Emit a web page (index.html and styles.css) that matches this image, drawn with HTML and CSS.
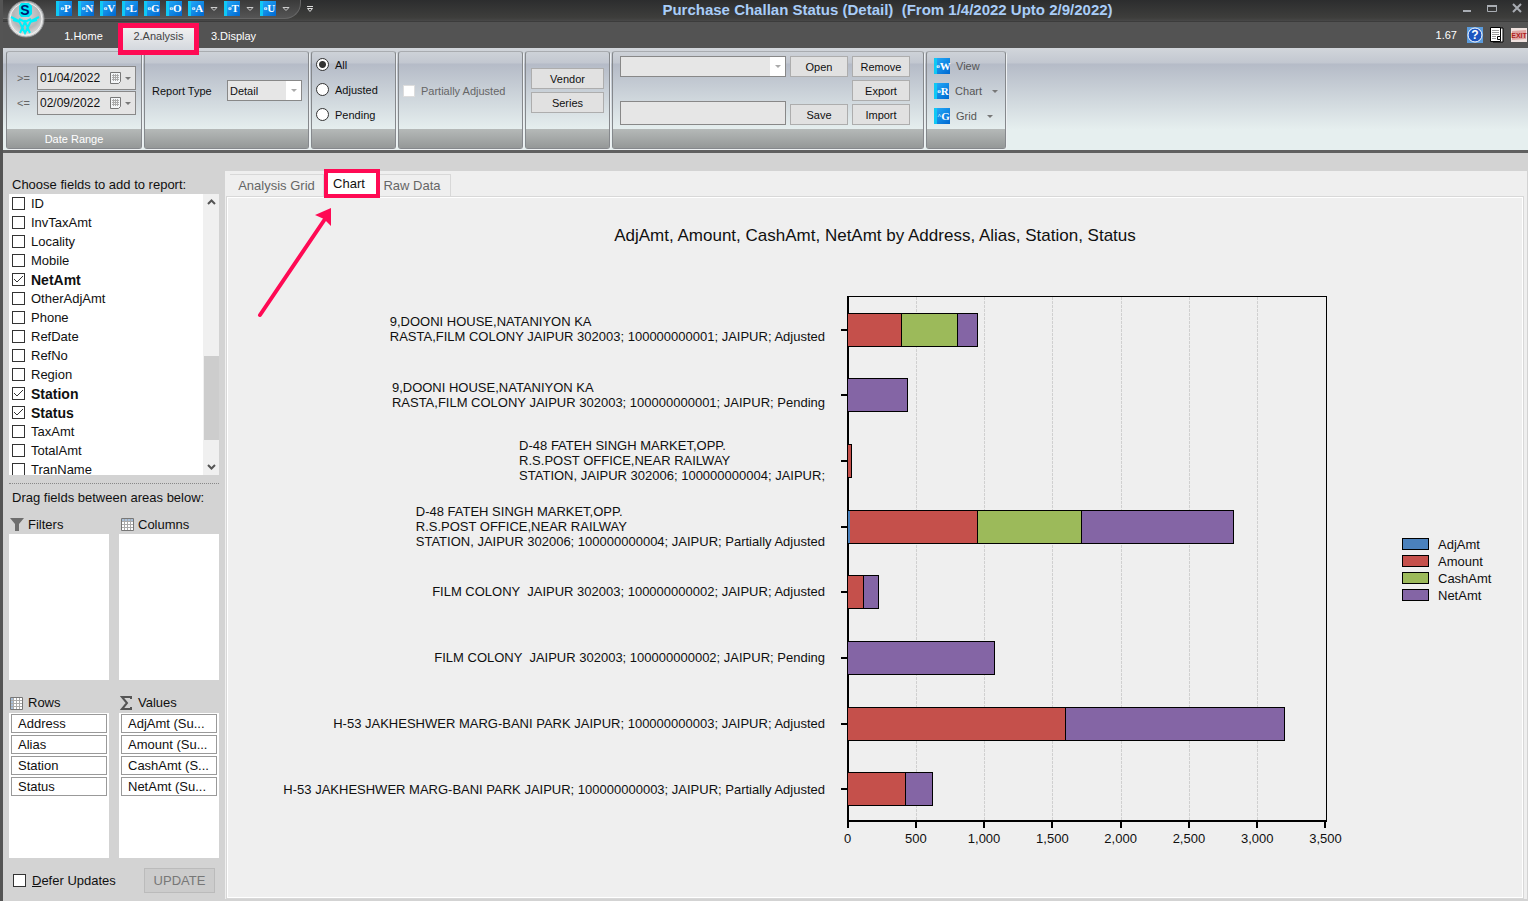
FILE: index.html
```html
<!DOCTYPE html>
<html lang="en">
<head>
    <meta charset="UTF-8">
    <meta name="viewport" content="width=device-width, initial-scale=1.0">
    <title>Purchase Challan Status (Detail)</title>
    <link rel="stylesheet" href="styles.css">
</head>
<body>
    <header class="titlebar">
        <div class="quick-bar">
            <button class="cmd" type="button"><small>o</small>P</button>
            <button class="cmd" type="button"><small>o</small>N</button>
            <button class="cmd" type="button"><small>o</small>V</button>
            <button class="cmd" type="button"><small>o</small>L</button>
            <button class="cmd" type="button"><small>o</small>G</button>
            <button class="cmd" type="button"><small>o</small>O</button>
            <button class="cmd" type="button"><small>o</small>A</button>
            <svg class="chev" viewBox="0 0 8 6"><path d="M1 1.500h6L4 4.500z" /></svg>
            <button class="cmd" type="button"><small>o</small>T</button>
            <svg class="chev" viewBox="0 0 8 6"><path d="M1 1.500h6L4 4.500z" /></svg>
            <button class="cmd" type="button"><small>o</small>U</button>
            <svg class="chev" viewBox="0 0 8 6"><path d="M1 1.500h6L4 4.500z" /></svg>
        </div>
        <svg class="more" viewBox="0 0 8 8"><path d="M1 1.500h6M1.500 3.500h5L4 6.500z" /></svg>
        <h1>Purchase Challan Status (Detail) &nbsp;(From 1/4/2022 Upto 2/9/2022)</h1>
        <div class="window-buttons">
            <button type="button" aria-label="Minimize"><svg viewBox="0 0 12 12"><path d="M2 8h8v2H2z" fill="#a9adb3" /></svg></button>
            <button type="button" aria-label="Maximize"><svg viewBox="0 0 12 12"><path d="M1.500 3.500h9v6h-9z" fill="none" stroke="#a9adb3" /><path d="M1 3h10v2H1z" fill="#a9adb3" /></svg></button>
            <button type="button" aria-label="Close"><svg viewBox="0 0 12 12"><path d="M2 2l8 8M10 2l-8 8" fill="none" stroke="#a9adb3" stroke-width="2" /></svg></button>
        </div>
    </header>

    <button class="orb" type="button" aria-label="Menu">
        <svg viewBox="0 0 38 38">
            <defs>
                <radialGradient id="orbFill" cx="50%" cy="40%" r="60%">
                    <stop offset="0" stop-color="#d4d6d8" />
                    <stop offset="0.600" stop-color="#b4b6b8" />
                    <stop offset="1" stop-color="#e8e8e8" />
                </radialGradient>
            </defs>
            <circle cx="19" cy="19" r="18" fill="url(#orbFill)" stroke="#8d8f91" />
            <circle cx="19" cy="19" r="16" fill="none" stroke="#f2f2f2" />
            <path d="M14 3h8l3 3v8l-3 3h-8l-2-3V6z" fill="#00e5f5" />
            <text x="18" y="15" text-anchor="middle">S</text>
            <path d="M4 17l8 4 6 12 6-12 8-4M6 20l7 2M30 20l-7 2M12 19l6 3 6-3M13 33l5-11 5 11" fill="none" stroke="#00f0fa" stroke-width="2" />
        </svg>
    </button>

    <nav class="menu-row">
        <button type="button">1.Home</button>
        <button type="button" class="active">2.Analysis</button>
        <button type="button">3.Display</button>
        <div class="menu-tools">
            <span class="version">1.67</span>
            <svg viewBox="0 0 16 16"><path d="M0 0h16v16H0z" fill="#5b9bdc" /><circle cx="8" cy="8" r="7" fill="#1c55c0" stroke="#fff" /><text class="help-mark" x="8" y="12" text-anchor="middle">?</text></svg>
            <svg viewBox="0 0 16 16"><path d="M4 1h10v14H4z" fill="#fff" stroke="#000" /><path d="M1.500 0.500h10v14h-10z" fill="#fff" stroke="#000" /><path d="M3 3.500h7M3 5.500h7M3 7.500h7M3 9.500h4M3 11.500h4" stroke="#999" /><path d="M8.500 9.500h3v3h-3z" fill="#fff" stroke="#000" /></svg>
            <svg viewBox="0 0 16 16"><path d="M0 1h16v14H0z" fill="#f0e2df" /><path d="M1 4l14-1v9L1 13z" fill="#dfa5a1" /><text class="exit-mark" x="8" y="11" text-anchor="middle">EXIT</text></svg>
        </div>
    </nav>

    <section class="ribbon">
        <fieldset class="group g-date">
            <div class="group-body">
                <label for="dateFrom">&gt;=</label>
                <div class="date">
                    <input type="text" id="dateFrom" value="01/04/2022">
                    <svg class="cal" viewBox="0 0 12 12"><path d="M0.500 0.500h10v9l-2 2h-8z" fill="#f4f6f8" stroke="#777" /><path d="M2 3.500h7M2 5.500h7M2 7.500h7M3.500 2v7M5.500 2v7M7.500 2v7" stroke="#aaa" /></svg>
                    <i class="arrow"></i>
                </div>
                <label for="dateTo">&lt;=</label>
                <div class="date">
                    <input type="text" id="dateTo" value="02/09/2022">
                    <svg class="cal" viewBox="0 0 12 12"><path d="M0.500 0.500h10v9l-2 2h-8z" fill="#f4f6f8" stroke="#777" /><path d="M2 3.500h7M2 5.500h7M2 7.500h7M3.500 2v7M5.500 2v7M7.500 2v7" stroke="#aaa" /></svg>
                    <i class="arrow"></i>
                </div>
            </div>
            <div class="caption">Date Range</div>
        </fieldset>
        <fieldset class="group g-type">
            <div class="group-body">
                <label for="reportType">Report Type</label>
                <div class="combo">
                    <select id="reportType"><option>Detail</option></select>
                    <span class="drop"><i class="arrow"></i></span>
                </div>
            </div>
            <div class="caption"></div>
        </fieldset>
        <fieldset class="group g-status">
            <div class="group-body">
                <label><input type="radio" name="status" checked>All</label>
                <label><input type="radio" name="status">Adjusted</label>
                <label><input type="radio" name="status">Pending</label>
            </div>
            <div class="caption"></div>
        </fieldset>
        <fieldset class="group g-partial">
            <div class="group-body">
                <label><input type="checkbox" disabled>Partially Adjusted</label>
            </div>
            <div class="caption"></div>
        </fieldset>
        <fieldset class="group g-vendor">
            <div class="group-body">
                <button class="btn" type="button">Vendor</button>
                <button class="btn" type="button">Series</button>
            </div>
            <div class="caption"></div>
        </fieldset>
        <fieldset class="group g-layout">
            <div class="group-body">
                <div class="layout-names">
                    <div class="combo">
                        <select aria-label="Saved layout"><option></option></select>
                        <span class="drop"><i class="arrow"></i></span>
                    </div>
                    <input type="text" aria-label="Layout name">
                </div>
                <div class="layout-buttons">
                    <button class="btn" type="button">Open</button>
                    <button class="btn" type="button">Save</button>
                </div>
                <div class="layout-buttons">
                    <button class="btn" type="button">Remove</button>
                    <button class="btn" type="button">Export</button>
                    <button class="btn" type="button">Import</button>
                </div>
            </div>
            <div class="caption"></div>
        </fieldset>
        <fieldset class="group g-view">
            <div class="group-body">
                <button type="button"><span class="cmd"><small>o</small>W</span>View</button>
                <button type="button"><span class="cmd"><small>o</small>R</span>Chart<i class="arrow"></i></button>
                <button type="button"><span class="cmd"><small>^</small>G</span>Grid<i class="arrow"></i></button>
            </div>
            <div class="caption"></div>
        </fieldset>
    </section>

    <main class="work">
        <aside class="sidebar">
            <p class="side-title">Choose fields to add to report:</p>
            <div class="field-list">
                <div class="fields">
                    <label><input type="checkbox">ID</label>
                    <label><input type="checkbox">InvTaxAmt</label>
                    <label><input type="checkbox">Locality</label>
                    <label><input type="checkbox">Mobile</label>
                    <label class="on"><input type="checkbox" checked>NetAmt</label>
                    <label><input type="checkbox">OtherAdjAmt</label>
                    <label><input type="checkbox">Phone</label>
                    <label><input type="checkbox">RefDate</label>
                    <label><input type="checkbox">RefNo</label>
                    <label><input type="checkbox">Region</label>
                    <label class="on"><input type="checkbox" checked>Station</label>
                    <label class="on"><input type="checkbox" checked>Status</label>
                    <label><input type="checkbox">TaxAmt</label>
                    <label><input type="checkbox">TotalAmt</label>
                    <label><input type="checkbox">TranName</label>
                </div>
                <div class="scroll">
                    <svg viewBox="0 0 9 9"><path d="M1 6l3.500-3.500L8 6" /></svg>
                    <div class="thumb"></div>
                    <svg viewBox="0 0 9 9"><path d="M1 3l3.500 3.500L8 3" /></svg>
                </div>
            </div>
            <p class="side-title drag">Drag fields between areas below:</p>
            <div class="areas">
                <section class="area">
                    <h2><svg viewBox="0 0 14 14"><path d="M0 1h14L9 7v7H5V7z" fill="#6d6d6d" /></svg>Filters</h2>
                    <div class="box"></div>
                </section>
                <section class="area">
                    <h2><svg viewBox="0 0 14 14"><path d="M1.500 1.500h12v12h-12z" fill="#fff" stroke="#777" /><path d="M2 2h11v3H2z" fill="#a9bfd8" /><path d="M2 4.500h11M2 7.500h11M2 10.500h11M4.500 2v11M7.500 2v11M10.500 2v11" stroke="#aaa" /></svg>Columns</h2>
                    <div class="box"></div>
                </section>
                <section class="area">
                    <h2><svg viewBox="0 0 14 14"><path d="M0.500 1.500h12v12h-12z" fill="#fff" stroke="#777" /><path d="M1 2h3v11H1z" fill="#a9bfd8" /><path d="M1 4.500h11M1 7.500h11M1 10.500h11M3.500 2v11M6.500 2v11M9.500 2v11" stroke="#aaa" /></svg>Rows</h2>
                    <div class="box">
                        <button type="button">Address</button>
                        <button type="button">Alias</button>
                        <button type="button">Station</button>
                        <button type="button">Status</button>
                    </div>
                </section>
                <section class="area">
                    <h2><svg viewBox="0 0 14 14"><path d="M11 3V1H2l5 6-5 6h9v-2" fill="none" stroke="#555" stroke-width="2" /></svg>Values</h2>
                    <div class="box">
                        <button type="button">AdjAmt (Su...</button>
                        <button type="button">Amount (Su...</button>
                        <button type="button">CashAmt (S...</button>
                        <button type="button">NetAmt (Su...</button>
                    </div>
                </section>
            </div>
            <div class="side-footer">
                <label><input type="checkbox"><span><u>D</u>efer Updates</span></label>
                <button type="button" disabled>UPDATE</button>
            </div>
        </aside>

        <section class="pane">
            <div class="tabs">
                <button type="button">Analysis Grid</button>
                <button type="button" class="active">Chart</button>
                <button type="button">Raw Data</button>
            </div>
            <svg class="pointer" viewBox="0 0 80 116"><path d="M5 111L70 15" fill="none" stroke="#ff0a54" stroke-width="4" stroke-linecap="round" /><path d="M76 4L60 11l9 4 7 7z" fill="#ff0a54" /></svg>
            <div class="page">
                <h2 class="chart-title">AdjAmt, Amount, CashAmt, NetAmt by Address, Alias, Station, Status</h2>
                <div class="chart">
                    <div class="categories">
                        <span>9,DOONI HOUSE,NATANIYON KA<br>RASTA,FILM COLONY JAIPUR 302003; 100000000001; JAIPUR; Adjusted</span>
                        <span>9,DOONI HOUSE,NATANIYON KA<br>RASTA,FILM COLONY JAIPUR 302003; 100000000001; JAIPUR; Pending</span>
                        <span>D-48 FATEH SINGH MARKET,OPP.<br>R.S.POST OFFICE,NEAR RAILWAY<br>STATION, JAIPUR 302006; 100000000004; JAIPUR;</span>
                        <span>D-48 FATEH SINGH MARKET,OPP.<br>R.S.POST OFFICE,NEAR RAILWAY<br>STATION, JAIPUR 302006; 100000000004; JAIPUR; Partially Adjusted</span>
                        <span>FILM COLONY &nbsp;JAIPUR 302003; 100000000002; JAIPUR; Adjusted</span>
                        <span>FILM COLONY &nbsp;JAIPUR 302003; 100000000002; JAIPUR; Pending</span>
                        <span>H-53 JAKHESHWER MARG-BANI PARK JAIPUR; 100000000003; JAIPUR; Adjusted</span>
                        <span>H-53 JAKHESHWER MARG-BANI PARK JAIPUR; 100000000003; JAIPUR; Partially Adjusted</span>
                    </div>
                    <div class="plot">
                        <div class="gridlines"><i></i><i></i><i></i><i></i><i></i><i></i><i></i></div>
                        <div class="bars">
                            <div class="bar"><i class="amount" style="width: 11.4%"></i><i class="cash" style="width: 11.7%"></i><i class="net" style="width: 4.1%"></i></div>
                            <div class="bar"><i class="net" style="width: 12.6%"></i></div>
                            <div class="bar"><i class="amount" style="width: 0.8%"></i></div>
                            <div class="bar"><i class="adj" style="width: 0.4%"></i><i class="amount" style="width: 26.8%"></i><i class="cash" style="width: 21.8%"></i><i class="net" style="width: 31.7%"></i></div>
                            <div class="bar"><i class="amount" style="width: 3.4%"></i><i class="net" style="width: 3.1%"></i></div>
                            <div class="bar"><i class="net" style="width: 30.8%"></i></div>
                            <div class="bar"><i class="amount" style="width: 45.7%"></i><i class="net" style="width: 45.7%"></i></div>
                            <div class="bar"><i class="amount" style="width: 12.1%"></i><i class="net" style="width: 5.7%"></i></div>
                        </div>
                    </div>
                    <ul class="legend">
                        <li><i class="adj"></i>AdjAmt</li>
                        <li><i class="amount"></i>Amount</li>
                        <li><i class="cash"></i>CashAmt</li>
                        <li><i class="net"></i>NetAmt</li>
                    </ul>
                    <div class="axis">
                        <span>0</span><span>500</span><span>1,000</span><span>1,500</span><span>2,000</span><span>2,500</span><span>3,000</span><span>3,500</span>
                    </div>
                </div>
            </div>
        </section>
    </main>
</body>
</html>
```
FILE: styles.css
```css
* {
    box-sizing: border-box;
}
body {
    margin: 0;
    min-height: 100vh;
    display: flex;
    flex-direction: column;
    position: relative;
    border-left: 3px solid #545454;
    background-color: #d3d3d3;
    color: #101010;
    font-family: "Liberation Sans", Arial, sans-serif;
    font-size: 13px;
}
button,
input,
select {
    margin: 0;
    font-family: inherit;
    font-size: inherit;
    color: inherit;
}
button {
    padding: 0;
    border: none;
    background: none;
}
svg {
    display: block;
    flex: none;
}
h1, h2, p, ul, fieldset {
    margin: 0;
    padding: 0;
    border: none;
    font-size: inherit;
    font-weight: normal;
}

/* title bar */
.titlebar {
    display: flex;
    align-items: flex-start;
    height: 22px;
    background: linear-gradient(#2c2d2e, #3e3e3c 85%, #484848);
    border-bottom: 1px solid #3c3c3c;
}
.quick-bar {
    display: flex;
    gap: 6px;
    width: 298px;
    height: 19px;
    padding: 1px 0 0 53px;
    border-bottom: 1px solid #666;
    border-right: 1px solid #666;
    border-radius: 0 0 16px 0;
    background: linear-gradient(#3a3a3a, #555);
}
.cmd {
    display: flex;
    align-items: center;
    justify-content: center;
    width: 16px;
    height: 15px;
    border-left: 3px solid #10c8f4;
    background: linear-gradient(135deg, #22a8f8, #0068d0);
    color: #fff;
    font-family: "Liberation Serif", serif;
    font-size: 11px;
    font-weight: bold;
    line-height: 15px;
}
.cmd small {
    font-size: 7px;
}
.chev {
    width: 8px;
    height: 6px;
    margin-top: 5px;
    fill: none;
    stroke: #ccc;
}
.more {
    width: 8px;
    height: 8px;
    margin: 5px 0 0 5px;
    fill: none;
    stroke: #ddd;
}
.titlebar h1 {
    flex: 1;
    color: #a9cdf8;
    font-size: 15px;
    font-weight: bold;
    line-height: 19px;
    text-align: center;
    white-space: nowrap;
}
.window-buttons {
    display: flex;
    gap: 13px;
    padding: 2px 5px 0 0;
}
.window-buttons svg {
    width: 12px;
    height: 12px;
}
.orb {
    position: absolute;
    top: 0;
    left: 4px;
}
.orb svg {
    width: 38px;
    height: 38px;
}
.orb text {
    fill: #001a70;
    font-size: 14px;
    font-weight: bold;
}

/* ribbon tabs */
.menu-row {
    display: flex;
    align-items: flex-start;
    height: 26px;
    padding-left: 43px;
    background-color: #535353;
    color: #fff;
    font-size: 11px;
}
.menu-row button {
    width: 75px;
    height: 28px;
}
.menu-row .active {
    position: relative;
    z-index: 1;
    width: 81px;
    height: 32px;
    margin: 1px -3px 0;
    padding-bottom: 6px;
    border: 5px solid #ff0a54;
    background: linear-gradient(#f0f0f0, #d4d8de);
    color: #444;
}
.menu-tools {
    display: flex;
    align-items: center;
    gap: 6px;
    margin-left: auto;
    height: 25px;
    padding-right: 1px;
}
.menu-tools svg {
    width: 16px;
    height: 16px;
}
.help-mark {
    fill: #fff;
    font-size: 12px;
    font-weight: bold;
}
.exit-mark {
    fill: #b0201c;
    font-size: 7px;
    font-weight: bold;
}
.version {
    margin-right: 4px;
}

/* ribbon */
.ribbon {
    display: flex;
    gap: 2px;
    height: 105px;
    padding: 3px;
    border-bottom: 3px solid #606060;
    background: linear-gradient(#d2d6db, #c2c7d0 15px, #b5bbc7 16px, #e6efef 82px);
    font-size: 11px;
}
.group {
    display: flex;
    flex-direction: column;
    min-width: 0;
    height: 98px;
    border: 1px solid #85888c;
    border-top-color: #a9acb0;
    border-radius: 3px;
    box-shadow: 1px 1px 0 #eef1f3;
}
.group-body {
    display: flex;
    flex: 1;
}
.caption {
    height: 19px;
    background: linear-gradient(#b5b9b8, #959898);
    color: #fff;
    line-height: 20px;
    text-align: center;
}
.g-date { width: 136px; }
.g-type { width: 165px; }
.g-status { width: 85px; }
.g-partial { width: 125px; }
.g-vendor { width: 85px; }
.g-layout { width: 312px; }
.g-view { width: 80px; }

.g-date .group-body {
    display: grid;
    grid-template-columns: 20px 99px;
    align-content: center;
    align-items: center;
    gap: 1px 0;
    padding-left: 10px;
}
.date {
    display: flex;
    align-items: center;
    height: 24px;
    padding-right: 4px;
    border: 1px solid #888;
    background-color: #e4e4e4;
}
.date input {
    flex: 1;
    width: 60px;
    padding: 0 0 0 2px;
    border: none;
    background: none;
    font-size: 12px;
}
.cal {
    width: 12px;
    height: 12px;
    margin-right: 3px;
}
.arrow {
    width: 0;
    height: 0;
    border: 3px solid transparent;
    border-top-color: #777;
    border-bottom: none;
}
.g-date label {
    color: #666;
}
.g-type .group-body {
    align-items: center;
    justify-content: space-between;
    padding: 0 6px 0 7px;
}
.combo {
    position: relative;
    width: 75px;
    height: 21px;
}
.combo select {
    appearance: none;
    width: 100%;
    height: 100%;
    padding: 0 2px;
    border: 1px solid #888;
    border-radius: 0;
    background-color: #e6e6e6;
}
.drop {
    position: absolute;
    top: 1px;
    right: 1px;
    bottom: 1px;
    display: flex;
    align-items: center;
    justify-content: center;
    width: 15px;
    background-color: #fff;
    pointer-events: none;
}
.drop .arrow {
    border-top-color: #aaa;
}
.g-status .group-body {
    flex-direction: column;
    gap: 12px;
    padding: 6px 4px 0;
}
.group label {
    display: flex;
    align-items: center;
}
input[type="radio"] {
    appearance: none;
    width: 13px;
    height: 13px;
    margin-right: 6px;
    border: 1px solid #333;
    border-radius: 50%;
    background-color: #fff;
}
input[type="radio"]:checked {
    background: radial-gradient(circle, #333 3px, #fff 4px);
}
.g-partial .group-body {
    align-items: center;
    padding-left: 4px;
    color: #666;
}
input[type="checkbox"] {
    appearance: none;
    flex: none;
    width: 13px;
    height: 13px;
    margin: 0;
    border: 1px solid #333;
    background-color: #fff;
}
.g-partial input[type="checkbox"] {
    width: 12px;
    height: 12px;
    margin-right: 6px;
    border-color: #ddd;
}
.btn {
    height: 21px;
    border: 1px solid #adadad;
    background-color: #e1e1e1;
}
.g-vendor .group-body {
    flex-direction: column;
    justify-content: center;
    gap: 3px;
    padding: 0 5px;
}
.g-layout .group-body {
    align-items: flex-start;
    gap: 4px;
    padding: 4px 7px 0;
}
.layout-names,
.layout-buttons {
    display: flex;
    flex-direction: column;
    justify-content: space-between;
    height: 69px;
}
.layout-names .combo,
.layout-names input {
    width: 166px;
}
.layout-names input {
    height: 24px;
    border: 1px solid #888;
    background-color: #e6e6e6;
}
.layout-buttons {
    width: 58px;
}
.g-view .group-body {
    flex-direction: column;
    gap: 9px;
    padding: 6px 7px 0;
}
.g-view button {
    display: flex;
    align-items: center;
    color: #555;
}
.g-view .cmd {
    height: 16px;
    margin-right: 6px;
}
.g-view .arrow {
    margin-left: 10px;
}

/* work area */
.work {
    display: flex;
    flex: 1;
    margin-top: 18px;
    padding-bottom: 2px;
}
.sidebar {
    display: flex;
    flex-direction: column;
    width: 222px;
    padding: 5px 6px 0;
}
.side-title {
    height: 18px;
    padding-left: 3px;
    line-height: 18px;
}
.side-title.drag {
    height: 31px;
    margin-top: 8px;
    border-top: 1px dotted #888;
    line-height: 27px;
}
.field-list {
    display: flex;
    height: 281px;
    overflow: hidden;
    background-color: #fff;
}
.fields {
    flex: 1;
}
.fields label {
    display: flex;
    align-items: center;
    gap: 6px;
    height: 19px;
    padding-left: 3px;
}
.fields .on {
    font-weight: bold;
    font-size: 14px;
}
.fields input:checked {
    background: url("data:image/svg+xml,%3Csvg xmlns='http://www.w3.org/2000/svg' viewBox='0 0 11 11'%3E%3Cpath d='M1 5l3 3 6-6' fill='none' stroke='%23333'/%3E%3C/svg%3E");
}
.scroll {
    display: flex;
    flex-direction: column;
    align-items: center;
    width: 16px;
    padding: 4px 0;
    background-color: #f0f0f0;
}
.scroll svg {
    width: 9px;
    height: 9px;
    fill: none;
    stroke: #555;
    stroke-width: 2;
}
.thumb {
    width: 15px;
    height: 84px;
    margin: auto 0 22px;
    background-color: #cdcdcd;
}
.areas {
    display: grid;
    flex: 1;
    grid-template-columns: 1fr 1fr;
    grid-template-rows: 1fr 1fr;
    gap: 13px 10px;
}
.area {
    display: flex;
    flex-direction: column;
}
.area h2 {
    display: flex;
    align-items: center;
    gap: 4px;
    height: 20px;
    padding-left: 1px;
}
.area svg {
    width: 14px;
    height: 14px;
}
.box {
    display: flex;
    flex: 1;
    flex-direction: column;
    gap: 2px;
    padding: 1px 2px;
    background-color: #fff;
}
.box button {
    height: 19px;
    padding-left: 6px;
    border: 1px solid #999;
    text-align: left;
    white-space: nowrap;
}
.side-footer {
    display: flex;
    align-items: center;
    justify-content: space-between;
    height: 41px;
    padding: 4px 4px 0;
}
.side-footer label {
    display: flex;
    align-items: center;
    gap: 6px;
}
.side-footer button {
    width: 71px;
    height: 25px;
    border: 1px solid #bbb;
    background-color: #ccc;
    color: #777;
}

.pane {
    position: relative;
    display: flex;
    flex: 1;
    flex-direction: column;
    margin-right: 1px;
    padding: 3px 3px 0 1px;
    background-color: #efefef;
}
.tabs {
    display: flex;
    height: 22px;
    padding-left: 4px;
    color: #666;
}
.tabs button {
    width: 77px;
    border-top: 1px solid #d8d8d8;
    border-right: 1px solid #d8d8d8;
    line-height: 21px;
}
.tabs button:first-child {
    width: 94px;
}
.tabs .active {
    z-index: 1;
    width: 56px;
    height: 29px;
    margin: -5px -6px 0 0;
    padding-right: 6px;
    border: 4px solid #ff0a54;
    background-color: #fff;
    color: #101010;
}
.pointer {
    position: absolute;
    top: 33px;
    left: 30px;
    width: 80px;
    height: 116px;
}
.page {
    display: flex;
    flex: 1;
    flex-direction: column;
    border: 1px solid #d8d8d8;
    box-shadow: inset 0 0 0 1px #fff;
}

/* chart */
.chart-title {
    padding: 29px 0 50px;
    font-size: 17px;
    line-height: 20px;
    text-align: center;
}
.chart {
    display: grid;
    flex: 1;
    grid-template-columns: 620px 1fr 196px;
    grid-template-rows: 1fr 76px;
}
.categories,
.bars {
    display: grid;
    grid-template-rows: repeat(8, 1fr);
    align-items: center;
}
.categories {
    justify-items: end;
    padding-right: 22px;
    line-height: 15px;
}
.plot {
    display: grid;
    border: 1px solid #000;
    border-width: 1px 1px 2px 2px;
}
.gridlines,
.bars {
    grid-area: 1 / 1;
}
.bars {
    margin: 0 0 -2px -1px;
}
.gridlines {
    display: grid;
    grid-template-columns: repeat(7, 1fr);
}
.gridlines i {
    background: repeating-linear-gradient(#d0d0d0 0 3px, transparent 3px 4px) right / 1px 100% no-repeat;
}
.gridlines i:last-child {
    background: none;
}
.bar {
    display: flex;
    align-items: center;
    height: 34px;
}
.bar::before {
    content: "";
    flex: none;
    width: 7px;
    height: 2px;
    margin-left: -7px;
    background-color: #000;
}
.bar i {
    flex: none;
    height: 34px;
    border: 1px solid #000;
    border-left: none;
}
.bar .adj {
    border-right: none;
}
.adj { background-color: #4a81bd; }
.amount { background-color: #c5504b; }
.cash { background-color: #9cba5a; }
.net { background-color: #8465a5; }
.legend {
    align-self: center;
    margin-top: 21px;
    padding-left: 75px;
    list-style: none;
}
.legend li {
    display: flex;
    align-items: center;
    gap: 9px;
    height: 17px;
}
.legend i {
    width: 27px;
    height: 12px;
    border: 1px solid #000;
}
.axis {
    grid-column: 2;
    display: flex;
    justify-content: space-between;
    padding-right: 1px;
}
.axis span {
    display: flex;
    flex-direction: column;
    align-items: center;
    width: 1px;
}
.axis span::before {
    content: "";
    width: 2px;
    height: 6px;
    margin-bottom: 3px;
    background-color: #000;
}
```
